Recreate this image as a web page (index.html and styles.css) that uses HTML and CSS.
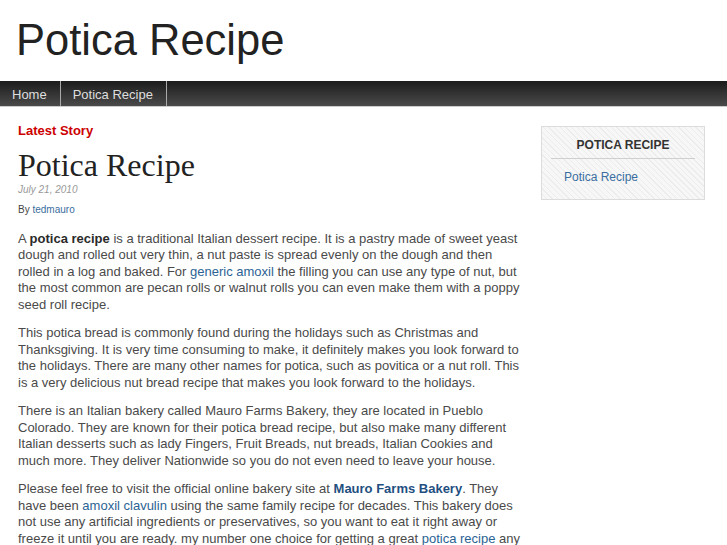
FILE: index.html
```html
<!DOCTYPE html>
<html>
<head>
<meta charset="utf-8">
<link rel="stylesheet" href="styles.css">
</head>
<body>
<header class="site-header">
  <h1 class="site-title">Potica Recipe</h1>
</header>
<nav class="nav">
  <a class="nav-item" href="#">Home</a>
  <a class="nav-item" href="#">Potica Recipe</a>
</nav>
<div class="wrap">
  <main class="content">
    <h3 class="latest">Latest Story</h3>
    <h2 class="post-title">Potica Recipe</h2>
    <div class="date">July 21, 2010</div>
    <div class="byline">By <a href="#">tedmauro</a></div>
    <div class="entry">
      <p>A <strong>potica recipe</strong> is a traditional Italian dessert recipe. It is a pastry made of sweet yeast dough and rolled out very thin, a nut paste is spread evenly on the dough and then rolled in a log and baked. For <a href="#">generic amoxil</a> the filling you can use any type of nut, but the most common are pecan rolls or walnut rolls you can even make them with a poppy seed roll recipe.</p>
      <p>This potica bread is commonly found during the holidays such as Christmas and Thanksgiving. It is very time consuming to make, it definitely makes you look forward to the holidays. There are many other names for potica, such as povitica or a nut roll. This is a very delicious nut bread recipe that makes you look forward to the holidays.</p>
      <p>There is an Italian bakery called Mauro Farms Bakery, they are located in Pueblo Colorado. They are known for their potica bread recipe, but also make many different Italian desserts such as lady Fingers, Fruit Breads, nut breads, Italian Cookies and much more. They deliver Nationwide so you do not even need to leave your house.</p>
      <p>Please feel free to visit the official online bakery site at <a class="strong-link" href="#">Mauro Farms Bakery</a>. They have been <a href="#">amoxil clavulin</a> using the same family recipe for decades. This bakery does not use any artificial ingredients or preservatives, so you want to eat it right away or freeze it until you are ready. my number one choice for getting a great <a href="#">potica recipe</a> any time of the year is Mauro Farms Bakery.</p>
    </div>
  </main>
  <aside class="sidebar">
    <div class="widget">
      <h4 class="widget-title">POTICA RECIPE</h4>
      <ul class="widget-list">
        <li><a href="#">Potica Recipe</a></li>
      </ul>
    </div>
  </aside>
</div>
</body>
</html>
```

FILE: styles.css
```css
html, body {
  margin: 0;
  padding: 0;
  background: #fff;
  font-family: "Liberation Sans", Arial, sans-serif;
  color: #4a4a4a;
}
a { text-decoration: none; }

.site-header {
  height: 81px;
  padding: 0 0 0 16px;
  box-sizing: border-box;
}
.site-title {
  margin: 0;
  padding-top: 15px;
  font-size: 43.5px;
  font-weight: normal;
  line-height: 50px;
  color: #222;
}

.nav {
  display: flex;
  height: 25px;
  background: linear-gradient(#1c1c1c, #4a4a4a);
  border-bottom: 1px solid #ccc;
}
.nav-item {
  display: block;
  padding: 2px 13px 0 12px;
  line-height: 23px;
  font-size: 13px;
  color: #dedede;
  border-right: 1px solid #aaa;
}

.wrap {
  display: flex;
  padding: 0 0 0 18px;
}
.content {
  width: 508px;
}
.latest {
  margin: 16px 0 0 0;
  font-size: 13px;
  line-height: 16px;
  font-weight: bold;
  color: #cc0000;
}
.post-title {
  margin: 8px 0 0 0;
  font-family: "Liberation Serif", "Times New Roman", serif;
  font-weight: normal;
  font-size: 32px;
  line-height: 36px;
  color: #222;
}
.date {
  margin-top: 1px;
  font-size: 10px;
  font-style: italic;
  color: #999;
  line-height: 12px;
}
.byline {
  margin-top: 8px;
  font-size: 10px;
  line-height: 12px;
  color: #444;
}
.byline a { color: #3b6e9e; }

.entry { margin-top: 14.5px; }
.entry p {
  margin: 0 0 12px 0;
  font-size: 13px;
  line-height: 16.5px;
}
.entry a { color: #2b6394; }
.entry strong { color: #2a2a2a; }
.entry a.strong-link { color: #1f4f7f; font-weight: bold; }

.sidebar {
  margin-left: 15px;
  padding-top: 19px;
}
.widget {
  width: 144px;
  height: 72px;
  border: 1px solid #dcdcdc;
  background-color: #f5f5f5;
  background-image: repeating-linear-gradient(45deg, #f7f7f7 0, #f7f7f7 3px, #ececec 3px, #ececec 4px);
  padding: 0 9px;
}
.widget-title {
  margin: 0;
  padding: 11px 0 6px 0;
  text-align: center;
  font-size: 12px;
  line-height: 14px;
  font-weight: bold;
  color: #333;
  border-bottom: 1px solid #cfcfcf;
}
.widget-list {
  list-style: none;
  margin: 0;
  padding: 11px 0 0 13px;
}
.widget-list li {
  font-size: 12px;
  line-height: 14px;
}
.widget-list a { color: #3a6e9f; }
```
